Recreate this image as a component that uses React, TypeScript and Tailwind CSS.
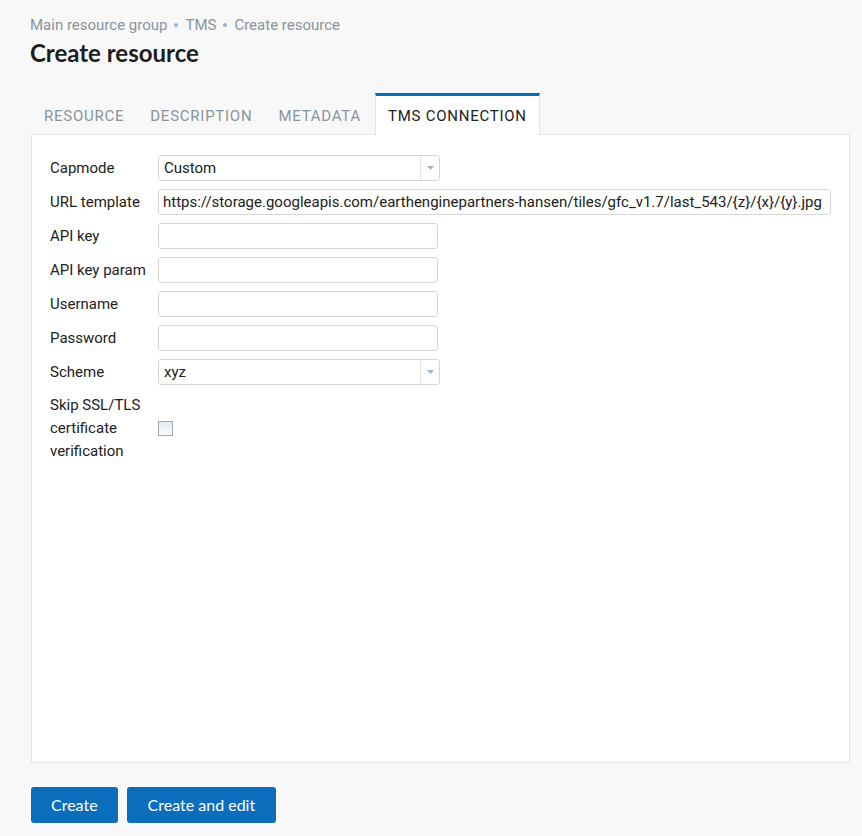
const tabs = ["Resource", "Description", "Metadata", "TMS connection"];

function Select({ value }: { value: string }) {
  return (
    <div className="flex h-[26px] w-[282px] items-stretch rounded-[3px] border border-[#d6d6d6] bg-white">
      <span className="flex-1 px-[5px] leading-[24px] text-[15px] text-[#212121]">{value}</span>
      <span className="flex w-[19px] items-center justify-center border-l border-[#e2e2e2]">
        <svg width="7" height="4" viewBox="0 0 7 4">
          <path d="M0 0 H7 L3.5 4 Z" fill="#9fb2c8" />
        </svg>
      </span>
    </div>
  );
}

function TextInput({ value = "", wide = false }: { value?: string; wide?: boolean }) {
  return (
    <div
      className={
        (wide ? "w-[673px] " : "w-[280px] ") +
        "h-[26px] rounded-[3px] border border-[#d6d6d6] bg-white px-[4px] leading-[24px] text-[15px] text-[#212121] whitespace-nowrap overflow-hidden"
      }
    >
      {value}
    </div>
  );
}

function Row({ label, children }: { label: string; children: React.ReactNode }) {
  return (
    <div className="flex items-center h-[34px]">
      <div className="w-[108px] text-[15px] text-[#212121]">{label}</div>
      {children}
    </div>
  );
}

export default function App() {
  return (
    <div className="min-h-[836px] bg-[#f8f8f8] px-[30px] pt-[15px] font-['Roboto',sans-serif]">
      <div className="flex items-center text-[15px] text-[#8a939c] leading-[20px]">
        <span>Main resource group</span>
        <span className="mx-[7px] inline-block h-[4px] w-[4px] rounded-full bg-[#8fb5d9]" />
        <span>TMS</span>
        <span className="mx-[7px] inline-block h-[4px] w-[4px] rounded-full bg-[#8fb5d9]" />
        <span>Create resource</span>
      </div>
      <h1 className="mt-[3px] font-['Lato',sans-serif] text-[24px] font-bold leading-[30px] text-[#1d1d1d]">
        Create resource
      </h1>

      <div className="mt-[25px] flex h-[41px] items-end pl-[1px]">
        {tabs.map((t, i) =>
          i === 3 ? (
            <div
              key={t}
              className="relative z-10 -mb-px ml-[1px] flex h-[42px] items-center border-x border-t-[3px] border-x-[#e4e4e4] border-t-[#0a6ebd] bg-white px-[12px] pt-[1px] text-[15px] uppercase tracking-[0.05em] text-[#212121]"
            >
              {t}
            </div>
          ) : (
            <div
              key={t}
              className="flex h-[41px] items-center border-t-[3px] border-t-transparent px-[13px] pt-[3px] text-[15px] uppercase tracking-[0.05em] text-[#8a939c]"
            >
              {t}
            </div>
          )
        )}
      </div>

      <div className="h-[629px] w-[819px] ml-[1px] border border-[#e4e4e4] bg-white px-[18px] pt-[16px]">
        <Row label="Capmode">
          <Select value="Custom" />
        </Row>
        <Row label="URL template">
          <TextInput
            wide
            value="https://storage.googleapis.com/earthenginepartners-hansen/tiles/gfc_v1.7/last_543/{z}/{x}/{y}.jpg"
          />
        </Row>
        <Row label="API key">
          <TextInput />
        </Row>
        <Row label="API key param">
          <TextInput />
        </Row>
        <Row label="Username">
          <TextInput />
        </Row>
        <Row label="Password">
          <TextInput />
        </Row>
        <Row label="Scheme">
          <Select value="xyz" />
        </Row>
        <div className="flex items-center pt-[5px]">
          <div className="w-[108px] text-[15px] leading-[23px] text-[#212121]">
            Skip SSL/TLS
            <br />
            certificate
            <br />
            verification
          </div>
          <div className="h-[15px] w-[15px] border border-[#a6a6a6] bg-gradient-to-b from-[#e2ecf6] to-[#f9fbfd]" />
        </div>
      </div>

      <div className="mt-[24px] ml-[1px] flex gap-[9px] font-['Lato',sans-serif]">
        <button className="h-[36px] rounded-[3px] bg-[#0a6ebd] px-[20px] text-[16px] text-white">Create</button>
        <button className="h-[36px] rounded-[3px] bg-[#0a6ebd] px-[21px] text-[16px] text-white">
          Create and edit
        </button>
      </div>
    </div>
  );
}
